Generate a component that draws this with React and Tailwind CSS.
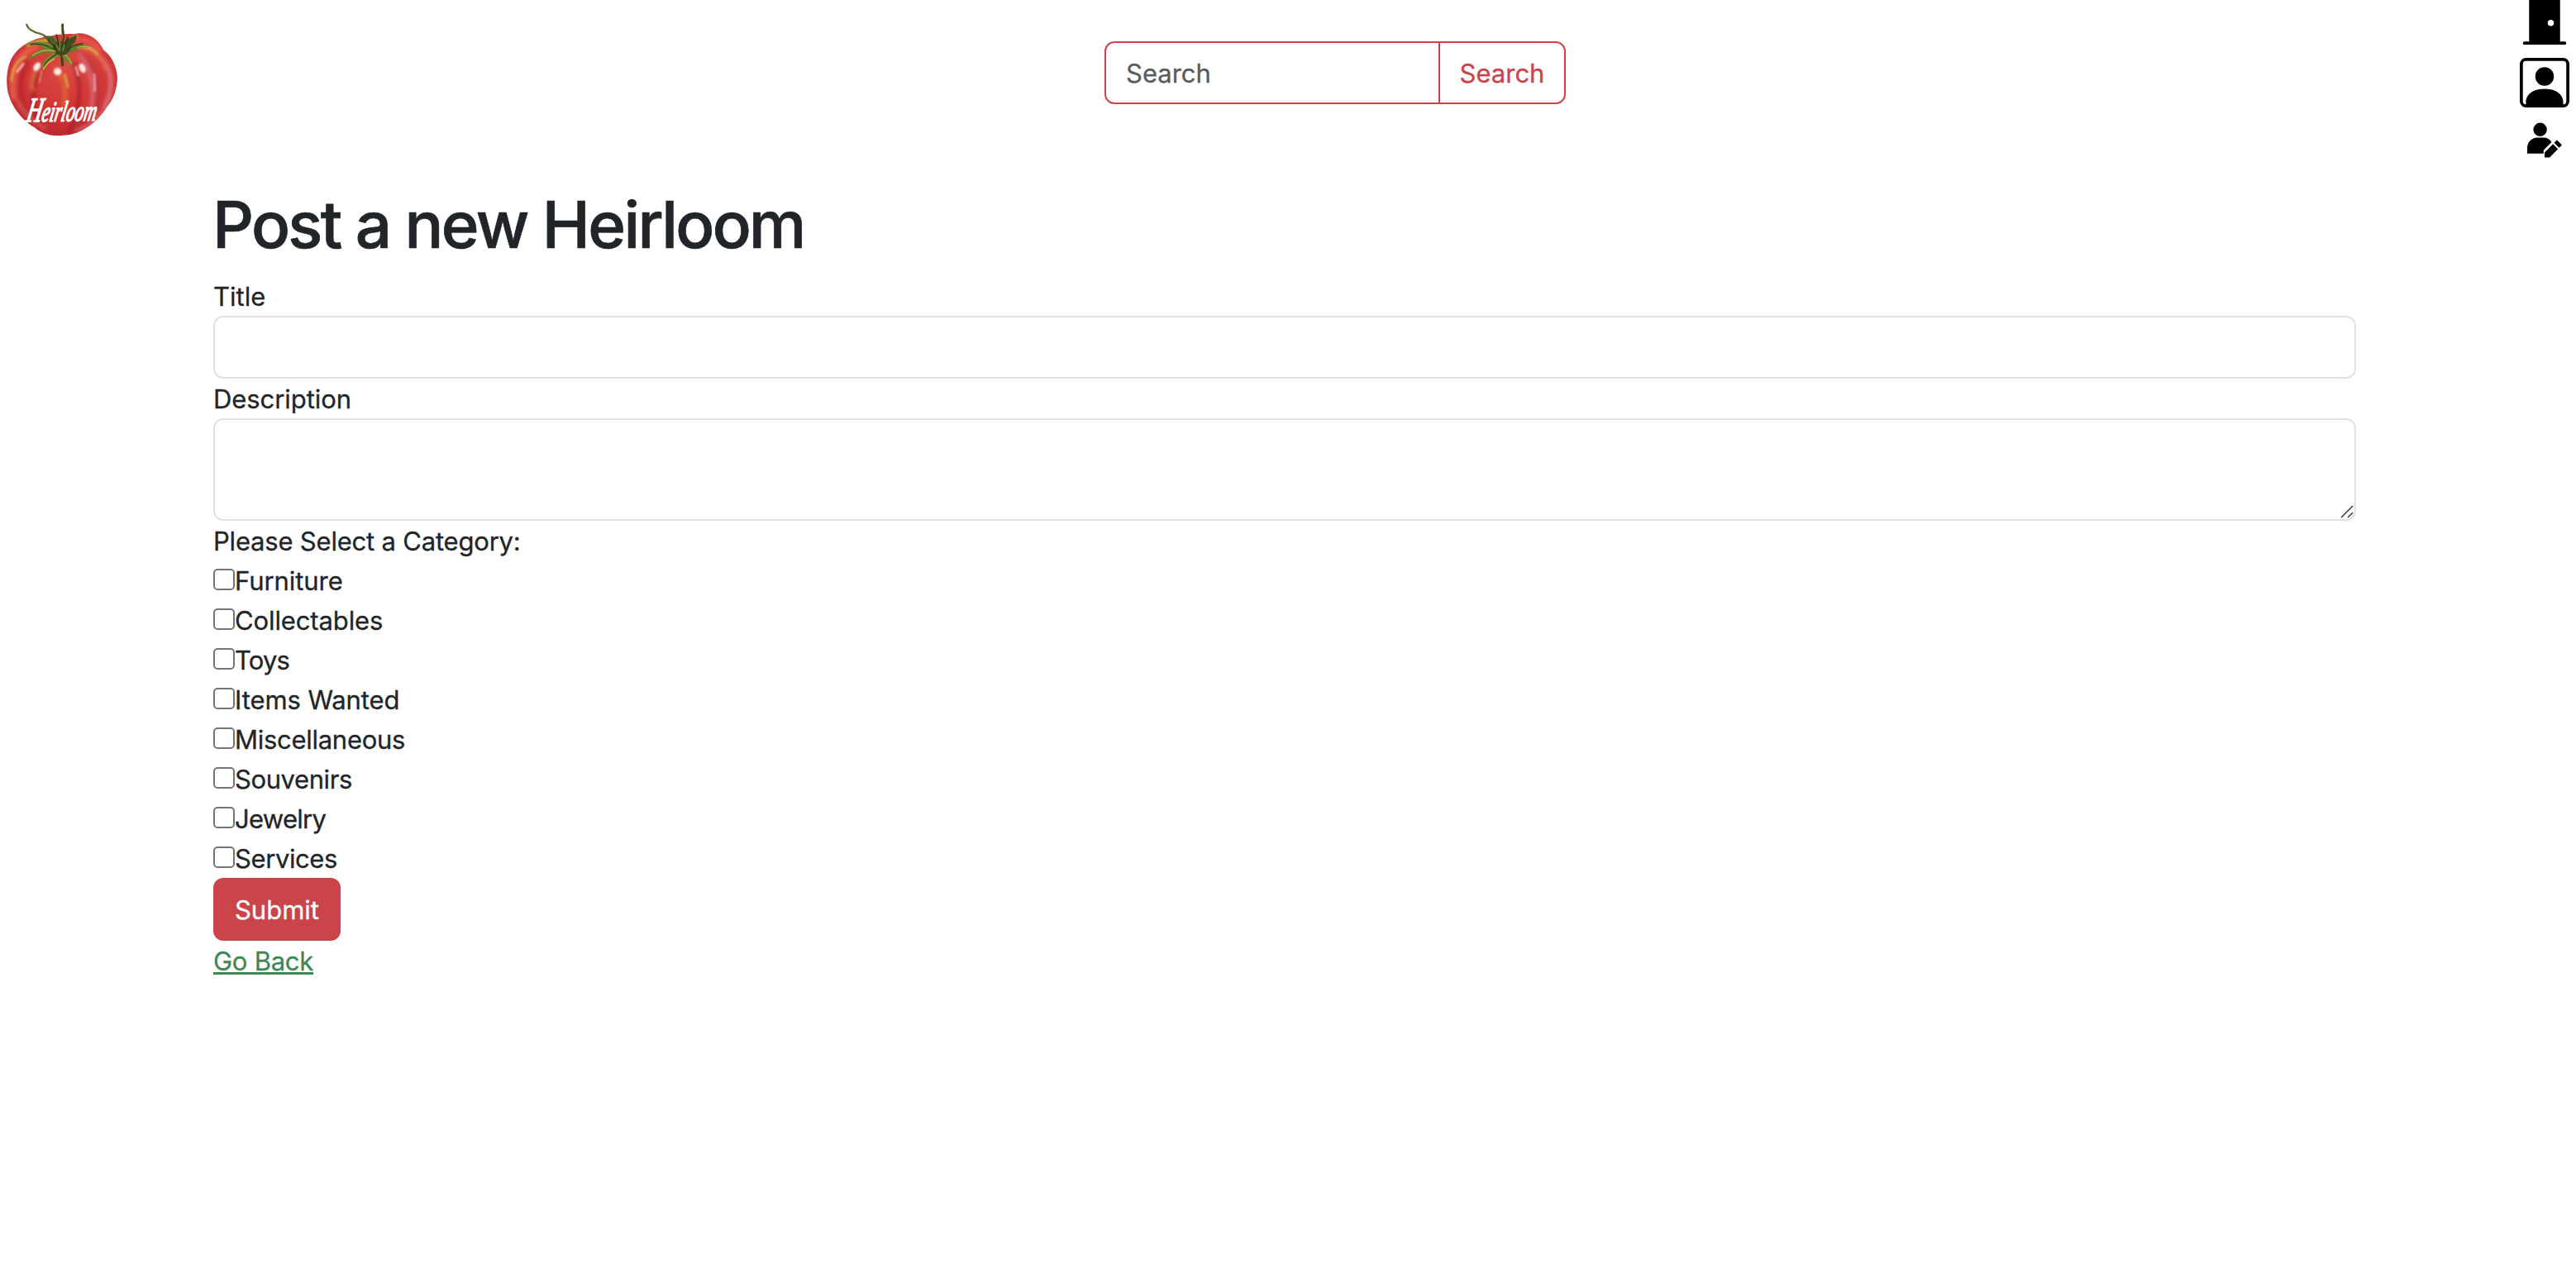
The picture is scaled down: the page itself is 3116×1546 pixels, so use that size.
import { BsDoorClosedFill, BsPersonSquare } from "react-icons/bs";

const CATEGORIES = [
  { name: "Furniture", tracking: "tracking-[-0.06px]" },
  { name: "Collectables", tracking: "tracking-[-0.12px]" },
  { name: "Toys", tracking: "tracking-[-0.8px]" },
  { name: "Items Wanted", tracking: "tracking-[-0.09px]" },
  { name: "Miscellaneous", tracking: "tracking-[-0.28px]" },
  { name: "Souvenirs", tracking: "tracking-[-0.4px]" },
  { name: "Jewelry", tracking: "tracking-[-0.7px]" },
  { name: "Services", tracking: "tracking-[-0.4px]" },
];

function TomatoLogo() {
  return (
    <svg className="mt-5 h-[150px] w-[160px]" viewBox="0 0 480 450" role="img" aria-label="Heirloom">
      <defs>
        <radialGradient id="flesh" cx="0.5" cy="0.4" r="0.62">
          <stop offset="0" stopColor="#dc4a42" />
          <stop offset="0.6" stopColor="#cf3535" />
          <stop offset="1" stopColor="#b9262d" />
        </radialGradient>
        <filter id="soft" x="-50%" y="-50%" width="200%" height="200%">
          <feGaussianBlur stdDeviation="6" />
        </filter>
        <filter id="softer" x="-50%" y="-50%" width="200%" height="200%">
          <feGaussianBlur stdDeviation="3" />
        </filter>
        <clipPath id="body">
          <path d="M25 245C24 190 34 140 85 105C110 88 140 76 180 72C215 60 262 66 285 61C325 60 358 84 376 122C406 142 424 182 426 222C424 266 412 300 388 328C366 364 335 394 295 415C268 429 240 430 215 433C180 432 150 425 125 402C85 380 28 320 25 245Z" />
        </clipPath>
      </defs>
      <g clipPath="url(#body)">
        <rect width="480" height="450" fill="url(#flesh)" />
        <g fill="none" filter="url(#soft)" strokeLinecap="round">
          <path d="M50 290C36 200 60 140 130 110" stroke="#e65a4a" strokeWidth="22" />
          <path d="M150 190C110 250 110 340 150 400" stroke="#a81f26" strokeWidth="12" />
          <path d="M100 170C66 220 66 300 100 350" stroke="#b4232a" strokeWidth="12" />
          <path d="M270 170C300 250 290 350 250 425" stroke="#ad2029" strokeWidth="12" />
          <path d="M300 140C370 200 370 310 330 390" stroke="#b8333e" strokeWidth="9" />
          <path d="M330 120C410 180 420 240 380 330" stroke="#df7280" strokeWidth="15" />
          <path d="M290 140C340 200 345 290 325 350" stroke="#d96370" strokeWidth="15" />
          <path d="M280 85C330 85 350 100 360 120" stroke="#e2574e" strokeWidth="18" />
          <path d="M300 112C350 124 375 150 385 190" stroke="#e56c55" strokeWidth="13" />
          <path d="M205 190C235 230 245 280 230 320" stroke="#df6035" strokeWidth="17" />
          <path d="M142 180C120 210 110 240 118 265" stroke="#e27a42" strokeWidth="9" />
          <path d="M60 300C85 350 120 385 165 405" stroke="#d95b57" strokeWidth="9" />
          <path d="M390 315C360 370 320 400 280 414" stroke="#dd707c" strokeWidth="9" />
        </g>
        <g fill="none" filter="url(#softer)" strokeLinecap="round">
          <path d="M42 232C44 190 62 160 92 146" stroke="#d9a03a" strokeWidth="8" />
          <path d="M100 105C130 88 160 84 200 88" stroke="#c9a63a" strokeWidth="12" />
          <path d="M255 82L278 72" stroke="#e2a13e" strokeWidth="11" />
          <path d="M275 114C310 104 338 118 352 136" stroke="#dfa53e" strokeWidth="9" />
          <path d="M235 212L246 254" stroke="#e2904a" strokeWidth="10" />
          <path d="M62 200L84 172" stroke="#f1b8ae" strokeWidth="9" />
          <path d="M275 182L284 214" stroke="#f5c4c0" strokeWidth="6" />
          <path d="M342 210L344 270" stroke="#e99ba6" strokeWidth="8" />
          <path d="M152 195L142 240" stroke="#e9937f" strokeWidth="5" />
        </g>
        <g fill="#fde9e9" filter="url(#softer)">
          <ellipse cx="209" cy="200" rx="14" ry="13" />
          <ellipse cx="299" cy="187" rx="11" ry="18" transform="rotate(-25 299 187)" />
          <ellipse cx="134" cy="182" rx="11" ry="17" transform="rotate(35 134 182)" />
        </g>
      </g>
      <g fill="none" strokeLinecap="round">
        <path d="M97 30C102 50 125 57 145 62C162 66 172 76 182 100" stroke="#52622f" strokeWidth="7" />
        <path d="M104 42C118 54 140 56 158 68" stroke="#9aa353" strokeWidth="2" />
        <path d="M227 30C223 50 236 64 226 92C220 120 224 148 227 176" stroke="#38451f" strokeWidth="9" />
        <path d="M224 36C220 54 231 70 224 88" stroke="#8a9350" strokeWidth="2.5" />
      </g>
      <path d="M205 112C175 90 130 84 90 104C125 98 145 106 165 116C195 126 212 125 205 112Z" fill="#6c8533" />
      <path d="M202 120C165 108 125 120 98 160C130 142 150 136 170 130C190 134 205 130 202 120Z" fill="#66812f" />
      <path d="M205 130C175 140 152 160 154 194C172 166 196 154 218 142Z" fill="#798c31" />
      <path d="M230 128C246 138 262 156 263 180C244 170 232 152 222 140Z" fill="#6f852f" />
      <path d="M236 118C262 96 300 92 332 114C306 110 290 112 276 124C258 134 240 136 236 118Z" fill="#65792b" />
      <path d="M158 72C185 64 206 78 216 108L198 118C196 94 180 82 158 72Z" fill="#4c6027" />
      <path d="M230 98C244 76 262 78 278 66C280 86 268 102 240 118Z" fill="#414f20" />
      <path d="M192 104C205 92 248 90 258 108C256 128 240 140 222 142C202 140 190 124 192 104Z" fill="#3e4b20" />
      <g fill="none" strokeLinecap="round">
        <path d="M112 102C145 94 174 106 196 120" stroke="#2e3d18" strokeWidth="4" />
        <path d="M118 142C145 122 174 118 200 126" stroke="#b3b545" strokeWidth="4" />
        <path d="M160 180C168 158 188 146 206 136" stroke="#32421a" strokeWidth="4" />
        <path d="M158 190C168 172 180 162 196 154" stroke="#d6c443" strokeWidth="4" />
        <path d="M236 140C246 146 254 158 259 170" stroke="#d8c84e" strokeWidth="3" />
        <path d="M282 114C300 106 315 107 328 113" stroke="#cdbd41" strokeWidth="4" />
        <path d="M244 122C260 104 285 100 300 98" stroke="#2c3817" strokeWidth="4" />
        <path d="M205 66L214 106M246 76L232 112M176 84L204 118" stroke="#2d3818" strokeWidth="5" />
        <path d="M204 102L212 120M234 102L228 124M218 96L216 124" stroke="#99a355" strokeWidth="3" />
      </g>
      <g transform="translate(92 382) rotate(-1) skewX(-12)" strokeLinejoin="round">
        <text
          x="0"
          y="0"
          textLength="254"
          lengthAdjust="spacingAndGlyphs"
          className="fill-white stroke-white stroke-[4.5px] font-['Liberation_Serif',serif] text-[104px] italic"
        >
          <tspan className="text-[126px]">H</tspan>eirloom
        </text>
      </g>
    </svg>
  );
}

function PersonEditIcon() {
  return (
    <svg className="size-[60px]" viewBox="0 0.5 60 60" fill="#000" aria-hidden="true">
      <circle cx="24.6" cy="17.2" r="8.2" />
      <path d="M9 46.3V40C9 32.5 14.2 27 21 27H29C33 27 36.6 29 38.4 32.4L28.8 42.2V46.3Z" />
      <path d="M30 51V45L40.2 34.7L46.2 40.7L36 51Z" />
      <path d="M41.6 33.3L44.2 30.6C44.7 30.1 45.2 30.1 45.7 30.6L50.3 35.2C50.8 35.7 50.8 36.2 50.3 36.7L47.6 39.3Z" />
    </svg>
  );
}

export default function App() {
  return (
    <div className="min-h-[1546px] bg-white font-[Inter,sans-serif] text-[31px] leading-[50px] text-[#212529] [-webkit-text-stroke:0.3px]">
      <header className="flex h-[222px] items-start justify-between">
        <div className="flex-1">
          <TomatoLogo />
        </div>
        <form className="ml-[122px] mt-[50px] flex h-[76px] w-[558px]" onSubmit={(e) => e.preventDefault()}>
          <input
            type="search"
            placeholder="Search"
            aria-label="Search"
            className="w-[406px] rounded-l-[12px] border-2 border-[#cb444a] px-6 pt-[2px] placeholder:text-[#595c5f] placeholder:opacity-100"
          />
          <button className="-ml-[2px] w-[154px] rounded-r-[12px] border-2 border-[#cb444a] pt-[2px] text-center text-[#cb444a]">
            Search
          </button>
        </form>
        <nav className="flex flex-1 flex-col items-end pr-2 text-black">
          <BsDoorClosedFill className="-mt-[6px] size-[60px]" />
          <BsPersonSquare className="mt-4 size-[60px]" />
          <div className="mt-[10px]">
            <PersonEditIcon />
          </div>
        </nav>
      </header>

      <main className="mx-auto w-[2592px] -translate-x-1">
        <h1 className="mb-4 -ml-px h-24 whitespace-nowrap text-[78px] font-medium leading-[100px] tracking-[-2.65px] [-webkit-text-stroke:0.7px]">
          Post a new Heirloom
        </h1>
        <form className="flex flex-col items-start" onSubmit={(e) => e.preventDefault()}>
          <label htmlFor="title" className="h-12">
            Title
          </label>
          <input id="title" className="h-[76px] w-full rounded-[12px] border-2 border-[#dee2e6] px-6" />
          <label htmlFor="description" className="h-12 tracking-[-0.07px]">
            Description
          </label>
          <div className="relative flex w-full">
            <textarea
              id="description"
              className="h-[124px] w-full resize-none rounded-[12px] border-2 border-[#dee2e6] px-6 py-3"
            />
            <svg
              className="absolute bottom-[3px] right-[3px] size-4"
              viewBox="0 0 16 16"
              fill="none"
              stroke="#444"
              strokeWidth="1.7"
              aria-hidden="true"
            >
              <path d="M1 15L15 1M9 15L15 9" />
            </svg>
          </div>
          <p className="h-12 tracking-[-0.2px]">Please Select a Category:</p>
          {CATEGORIES.map(({ name, tracking }) => (
            <label key={name} className="flex h-12 items-start">
              <input
                type="checkbox"
                className="mt-[10px] size-[26px] appearance-none rounded-[5px] border-2 border-[#767676] bg-white"
              />
              <span className={tracking}>{name}</span>
            </label>
          ))}
          <button className="h-[76px] w-[154px] rounded-[12px] bg-[#cb444a] pt-[2px] text-white">Submit</button>
          <a
            href="#"
            className="h-12 tracking-[-0.26px] text-[#3f8757] underline decoration-[3px] underline-offset-[2px] [text-decoration-skip-ink:none]"
          >
            Go Back
          </a>
        </form>
      </main>
    </div>
  );
}
